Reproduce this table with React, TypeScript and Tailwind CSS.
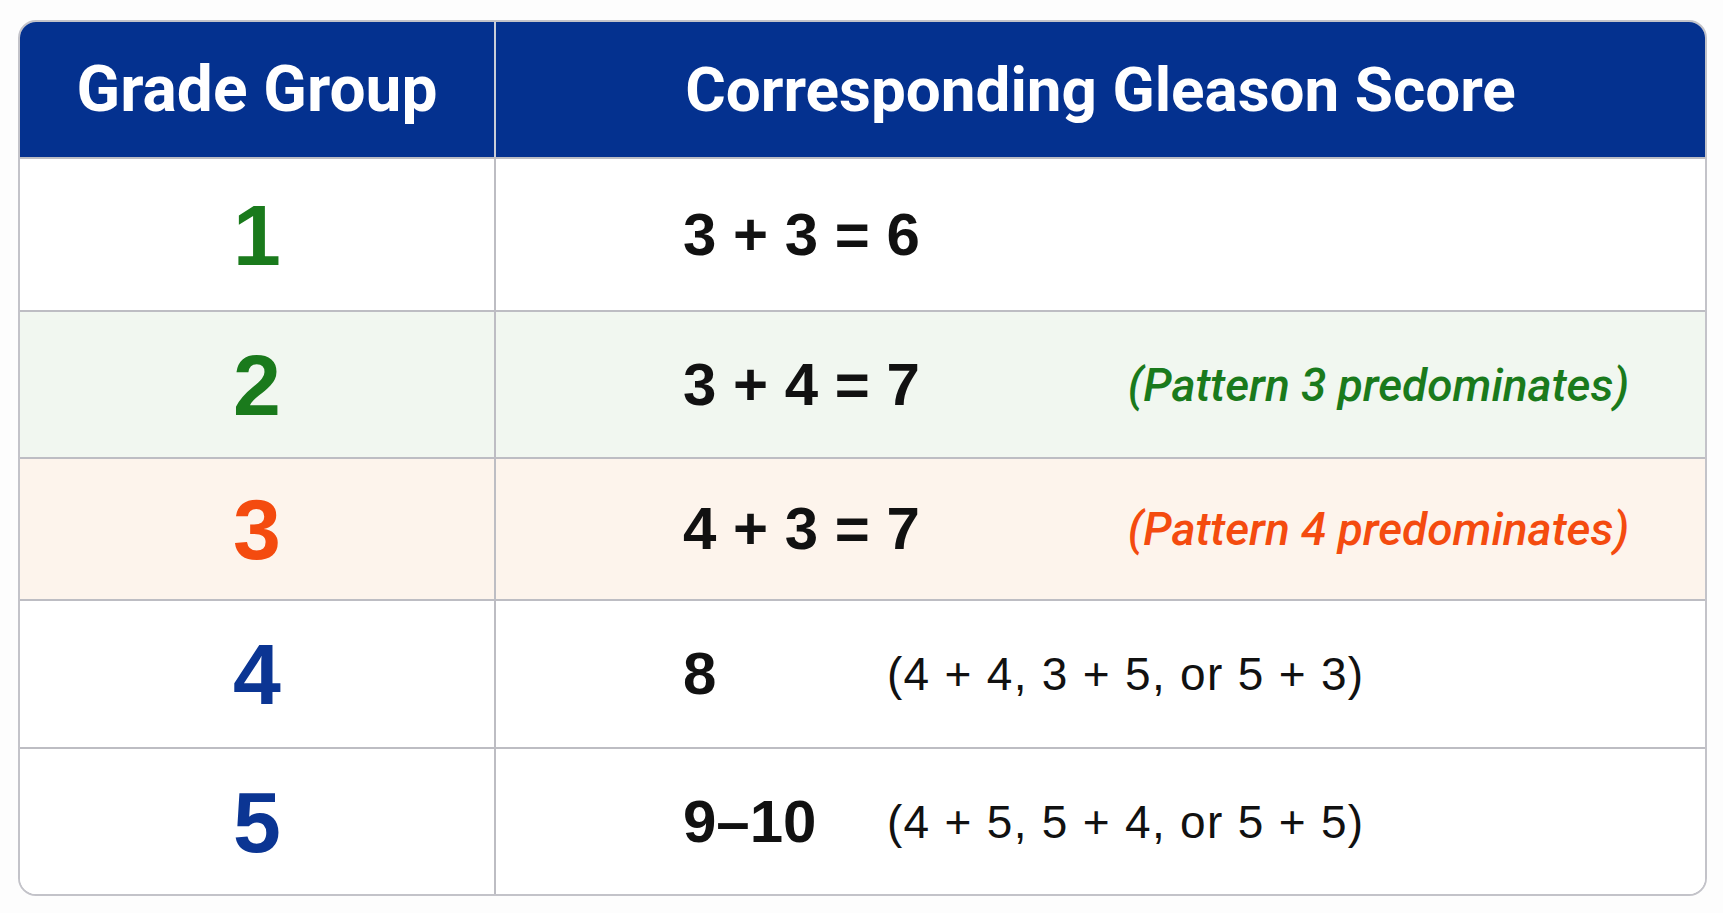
import React from 'react';

interface Row {
  grade: string;
  gradeColor: string;
  score: string;
  note?: string;
  noteKind?: 'green' | 'orange' | 'plain';
  bg: string;
  height: string;
}

const rows: Row[] = [
  { grade: '1', gradeColor: 'text-[#1a7a1c]', score: '3 + 3 = 6', bg: 'bg-white', height: 'h-[153px]' },
  {
    grade: '2',
    gradeColor: 'text-[#1a7a1c]',
    score: '3 + 4 = 7',
    note: '(Pattern 3 predominates)',
    noteKind: 'green',
    bg: 'bg-[#f1f7f0]',
    height: 'h-[147px]',
  },
  {
    grade: '3',
    gradeColor: 'text-[#f44b0f]',
    score: '4 + 3 = 7',
    note: '(Pattern 4 predominates)',
    noteKind: 'orange',
    bg: 'bg-[#fdf4ec]',
    height: 'h-[142px]',
  },
  {
    grade: '4',
    gradeColor: 'text-[#0b3593]',
    score: '8',
    note: '(4 + 4, 3 + 5, or 5 + 3)',
    noteKind: 'plain',
    bg: 'bg-white',
    height: 'h-[148px]',
  },
  {
    grade: '5',
    gradeColor: 'text-[#0b3593]',
    score: '9–10',
    note: '(4 + 5, 5 + 4, or 5 + 5)',
    noteKind: 'plain',
    bg: 'bg-white',
    height: 'h-[147px]',
  },
];

const sans = "font-['Liberation_Sans',Arial,sans-serif]";
const roboto = "font-['Roboto','Liberation_Sans',sans-serif]";

export default function App() {
  return (
    <div className="min-h-screen bg-[#fdfdfd] pl-[18px] pr-[16px] pt-[20px] pb-[18px]">
      <div className="rounded-[18px] border-2 border-[#c3c3c9] overflow-hidden bg-white">
        {/* header */}
        <div className="grid grid-cols-[476px_1fr] h-[135px] bg-[#04318f]">
          <div className="flex items-center justify-center border-r-2 border-[#c9cdd8]">
            <span className={`${roboto} text-[64px] font-bold text-white leading-none`}>Grade Group</span>
          </div>
          <div className="flex items-center justify-center">
            <span className={`${roboto} text-[62px] font-bold text-white leading-none`}>
              Corresponding Gleason Score
            </span>
          </div>
        </div>

        {rows.map(r => (
          <div
            key={r.grade}
            className={`grid grid-cols-[476px_1fr] border-t-2 border-[#bdbdc3] ${r.bg} ${r.height}`}
          >
            <div className="flex items-center justify-center border-r-2 border-[#bdbdc3]">
              <span className={`${sans} text-[86px] font-bold leading-none ${r.gradeColor}`}>{r.grade}</span>
            </div>
            <div className="flex items-center pl-[187px] pr-[76px]">
              {r.noteKind === 'plain' ? (
                <>
                  <span className={`${sans} w-[204px] text-[60px] font-bold leading-none text-[#111]`}>{r.score}</span>
                  <span className={`${sans} text-[46px] leading-none text-[#111] tracking-[1.3px]`}>{r.note}</span>
                </>
              ) : (
                <>
                  <span className={`${sans} text-[60px] font-bold leading-none text-[#111]`}>{r.score}</span>
                  {r.note && (
                    <span
                      className={`${roboto} ml-auto text-[46px] italic font-medium leading-none ${
                        r.noteKind === 'green' ? 'text-[#1a7a1c]' : 'text-[#f44b0f]'
                      }`}
                    >
                      {r.note}
                    </span>
                  )}
                </>
              )}
            </div>
          </div>
        ))}
      </div>
    </div>
  );
}
